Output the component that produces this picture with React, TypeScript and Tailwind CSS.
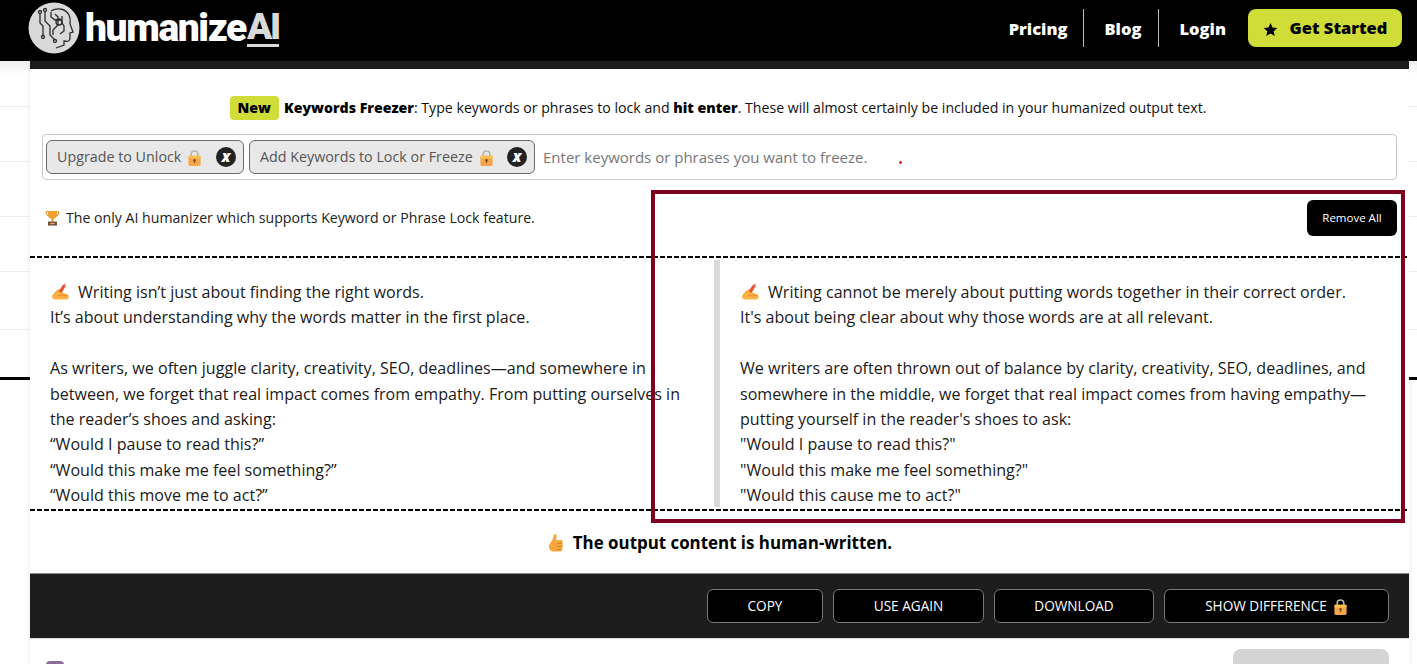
import React from "react";

const sans = "font-['Open_Sans','Noto_Sans',sans-serif]";

const leftLines = [
  "Writing isn’t just about finding the right words.",
  "It’s about understanding why the words matter in the first place.",
  "",
  "As writers, we often juggle clarity, creativity, SEO, deadlines—and somewhere in",
  "between, we forget that real impact comes from empathy. From putting ourselves in",
  "the reader’s shoes and asking:",
  "“Would I pause to read this?”",
  "“Would this make me feel something?”",
  "“Would this move me to act?”",
];

const rightLines = [
  "Writing cannot be merely about putting words together in their correct order.",
  "It's about being clear about why those words are at all relevant.",
  "",
  "We writers are often thrown out of balance by clarity, creativity, SEO, deadlines, and",
  "somewhere in the middle, we forget that real impact comes from having empathy—",
  "putting yourself in the reader's shoes to ask:",
  "\"Would I pause to read this?\"",
  "\"Would this make me feel something?\"",
  "\"Would this cause me to act?\"",
];

function LockIcon({ className }: { className?: string }) {
  return (
    <svg viewBox="0 0 16 18" className={className}>
      <path d="M4.5 8V5.5a3.5 3.5 0 0 1 7 0V8" fill="none" stroke="#b9b4a8" strokeWidth="1.7" />
      <rect x="1.5" y="7" width="13" height="11" rx="1.5" fill="#f5a54a" />
      <rect x="1.5" y="7" width="13" height="3" rx="1.2" fill="#fbc04f" />
      <circle cx="8" cy="12" r="1.3" fill="#7a4a1c" />
      <rect x="7.4" y="12" width="1.2" height="3" fill="#7a4a1c" />
    </svg>
  );
}

function WritingHand({ className }: { className?: string }) {
  return (
    <svg viewBox="0 0 20 18" className={className}>
      <path d="M1 13l5-6 3-1 2 3 7 3c1 1 1 4-1 5H6c-2 0-5 0-5-4z" fill="#fbb144" />
      <path d="M7 13c3-1 7-1 10 0" fill="none" stroke="#e98a2c" strokeWidth="1" />
      <path d="M8 8l5-7 2.5 1.6L11 10z" fill="#e8502f" />
      <path d="M13 1l1-1 2.4 1.6-.9 1z" fill="#f08a7a" />
    </svg>
  );
}

function Trophy({ className }: { className?: string }) {
  return (
    <svg viewBox="0 0 16 18" className={className}>
      <path d="M3 1h10v4c0 3-2 5-5 5S3 8 3 5z" fill="#f0a030" />
      <path d="M3 2H1c0 3 1 4.5 3 5M13 2h2c0 3-1 4.5-3 5" fill="none" stroke="#e09030" strokeWidth="1.2" />
      <rect x="7" y="10" width="2" height="3" fill="#d68a2a" />
      <rect x="3" y="13" width="10" height="4.5" fill="#6d4b3e" />
      <rect x="5.5" y="14.5" width="5" height="1.5" fill="#e6b04c" />
    </svg>
  );
}

function ThumbsUp({ className }: { className?: string }) {
  return (
    <svg viewBox="0 0 16 20" className={className}>
      <path d="M7 1c1.500 0 2 1.500 1.500 3L8 7h5c2 0 2 2.500 1.500 3.500.6 1.500.3 6.500-1.500 8H6c-3 0-5-2-5-5 0-2 1-3.500 2.500-5C5 7 5.500 1 7 1z" fill="#f6a83c" />
      <path d="M9 10.500h5M9 13.500h5M9 16.500h4" stroke="#d9822b" strokeWidth="1" fill="none" />
    </svg>
  );
}

function Logo() {
  return (
    <div className="flex items-center">
      <svg viewBox="0 0 52 52" className="h-[52px] w-[52px]">
        <circle cx="26" cy="26" r="25.5" fill="#d9d9d9" />
        <g fill="none" stroke="#2b2b2b" strokeWidth="1.3">
          <path d="M23 9c7-4 15-2 18 4 2 4 1 7 1 9l3 8-3 1v5c0 3-2 4-6 3v4l-8 3" />
          <path d="M12 12v9l3 3v9M17 9v10l5 5v9l5 5M23 10v5l4 3h6M27 12l3 3v8l-5 5v5M34 14v7l2 3v5l-4 3" />
          <circle cx="12" cy="10" r="1.5" />
          <circle cx="17" cy="8" r="1.5" />
          <circle cx="15" cy="35" r="1.5" />
          <circle cx="27" cy="39" r="1.5" />
          <circle cx="31" cy="20" r="3" />
        </g>
      </svg>
      <span className="ml-[5px] text-[39px] leading-none font-black tracking-[-1.4px] text-white font-['Roboto',sans-serif]">
        humanize
      </span>
      <span className="ml-[1px] border-b-[3px] border-[#d9d9d9] text-[37px] leading-[35px] font-black tracking-[-2px] text-[#d9d9d9] font-['Roboto',sans-serif]">
        AI
      </span>
    </div>
  );
}

function Header() {
  return (
    <header className="flex h-[61px] shrink-0 items-center justify-between bg-black pr-[15px] pb-[5px] pl-[28px]">
      <Logo />
      <nav className="flex items-center text-[16.500px] font-extrabold text-white">
        <span className="mt-[2px]">Pricing</span>
        <span className="ml-[16px] h-[38px] w-px bg-[#bbbbbb]" />
        <span className="mt-[2px] ml-[20px]">Blog</span>
        <span className="ml-[17px] h-[38px] w-px bg-[#bbbbbb]" />
        <span className="mt-[2px] ml-[20px]">Login</span>
        <button className="ml-[22px] flex h-[38px] w-[154px] items-center justify-center gap-[12px] rounded-lg bg-[#d0dc38] pt-[1px] text-[16.500px] font-extrabold text-black">
          <svg viewBox="0 0 24 24" className="mt-[2px] h-[15px] w-[15px]" fill="black">
            <path d="M12 1.500l3.100 7.200 7.800.7-5.900 5.200 1.800 7.700L12 18.200l-6.800 4.100L7 14.600 1.100 9.400l7.800-.7z" />
          </svg>
          Get Started
        </button>
      </nav>
    </header>
  );
}

function Gutter() {
  return (
    <div className="flex shrink-0 flex-col bg-white">
      <div className="h-[46px] border-b border-[#ececec] bg-gradient-to-b from-[#ededed] to-white to-30%" />
      <div className="h-[55px] border-b border-[#ececec]" />
      <div className="h-[55px] border-b border-[#ececec]" />
      <div className="h-[55px] border-b border-[#ececec]" />
      <div className="h-[58px] border-b border-[#ececec]" />
      <div className="h-[50px] border-b-[3px] border-black" />
    </div>
  );
}

function Chip({ label, width }: { label: string; width: string }) {
  return (
    <div className={`flex h-[34px] items-center rounded-md border-[1.5px] border-[#6b6b6b] bg-[#e8e8e8] pr-[7px] pl-[10px] ${width}`}>
      <span className="text-[14.300px] text-[#555555]">{label}</span>
      <LockIcon className="ml-[6px] h-[17px] w-[15px]" />
      <span className="ml-auto flex h-[20px] w-[20px] items-center justify-center rounded-full bg-[#222222] pb-[2px] text-[15px] leading-none font-extrabold text-white italic">
        x
      </span>
    </div>
  );
}

function Dashed() {
  return <div className="h-[2px] shrink-0 bg-[repeating-linear-gradient(90deg,#000_0_5px,transparent_5px_7px)]" />;
}

function TextColumn({ lines, className }: { lines: string[]; className?: string }) {
  return (
    <div className={`whitespace-nowrap text-[16.070px] leading-[25.400px] text-[#1a1a1a] ${className ?? ""}`}>
      {lines.map((line, i) => (
        <div key={i} className="h-[25.400px]">
          {i === 0 && <WritingHand className="mr-[8px] ml-[1px] inline-block h-[18px] w-[19px] align-[-3px]" />}
          {line}
        </div>
      ))}
    </div>
  );
}

function ActionButton({ children, width }: { children: React.ReactNode; width: string }) {
  return (
    <button className={`flex h-[34px] items-center justify-center rounded-md border border-[#777777] bg-black text-[13.600px] text-white ${width}`}>
      {children}
    </button>
  );
}

export default function App() {
  return (
    <div className={`relative flex h-[664px] w-[1417px] flex-col overflow-hidden bg-white ${sans}`}>
      <Header />
      <div className="flex min-h-0 flex-1">
        <div className="w-[30px]">
          <Gutter />
        </div>
        <main className="flex w-[1379px] flex-col bg-white shadow-[0_0_6px_rgba(0,0,0,0.08)]">
          <div className="h-[8px] shrink-0 bg-[#1c1c1c]" />

          {/* Keywords freezer */}
          <div className="mt-[27px] flex h-[24px] items-center justify-center pr-[3px] text-[14.150px] text-[#111111]">
            <span className="mr-[5px] rounded bg-[#d0dc38] px-[8px] py-[1px] font-extrabold text-black">New</span>
            <span className="font-extrabold text-black">Keywords Freezer</span>
            <span>: Type keywords or phrases to lock and&nbsp;</span>
            <span className="font-extrabold text-black">hit enter</span>
            <span>. These will almost certainly be included in your humanized output text.</span>
          </div>

          <div className="mx-[12px] mt-[14px] flex h-[46px] items-center gap-[5px] rounded border border-[#c9c9c9] pl-[3px]">
            <Chip label="Upgrade to Unlock" width="w-[198px]" />
            <Chip label="Add Keywords to Lock or Freeze" width="w-[286px]" />
            <span className="ml-[3px] text-[15px] text-[#777777]">Enter keywords or phrases you want to freeze.</span>
          </div>

          <div className="mt-[19px] flex h-[37px] items-center justify-between pr-[12px] pl-[15px]">
            <div className="flex items-center text-[14.130px] text-[#222222]">
              <Trophy className="mr-[6px] h-[16px] w-[15px]" />
              The only AI humanizer which supports Keyword or Phrase Lock feature.
            </div>
            <button className="h-[36px] w-[90px] rounded-md bg-black text-[11.500px] text-white">Remove All</button>
          </div>

          <div className="mt-[20px]">
            <Dashed />
          </div>

          <div className="flex h-[251px] shrink-0">
            <TextColumn lines={leftLines} className="w-[684px] pt-[22px] pl-[20px]" />
            <div className="mt-[2px] mb-[2px] w-[6px] bg-[#d9d9d9]" />
            <TextColumn lines={rightLines} className="flex-1 pt-[22px] pl-[20px]" />
          </div>

          <Dashed />

          <div className="flex h-[62px] shrink-0 items-center justify-center gap-[8px] pt-[2px] text-[16.900px] font-bold text-black">
            <ThumbsUp className="h-[20px] w-[18px]" />
            The output content is human-written.
          </div>

          <div className="flex h-[65px] shrink-0 items-center justify-end gap-[10px] border-t border-[#888888] bg-[#1c1c1c] pr-[20px]">
            <ActionButton width="w-[116px]">COPY</ActionButton>
            <ActionButton width="w-[151px]">USE AGAIN</ActionButton>
            <ActionButton width="w-[160px]">DOWNLOAD</ActionButton>
            <ActionButton width="w-[225px]">
              SHOW DIFFERENCE
              <LockIcon className="ml-[6px] h-[17px] w-[15px]" />
            </ActionButton>
          </div>

          <div className="relative flex-1 border-t border-[#dddddd]">
            <div className="absolute top-[22px] left-[16px] h-[10px] w-[18px] rounded-t bg-[#8b6c9b]" />
            <div className="absolute top-[10px] right-[20px] h-[20px] w-[156px] rounded-t-lg bg-[#d4d4d4]" />
          </div>
        </main>
        <div className="w-[8px]">
          <Gutter />
        </div>
      </div>

      {/* stray red dot in the input */}
      <div className="absolute top-[161px] left-[899px] h-[3px] w-[3px] rounded-full bg-[#e02020]" />
      {/* highlight rectangle drawn over the page */}
      <div className="absolute top-[190px] left-[651px] h-[333px] w-[754px] border-[4.500px] border-[#80001f]" />
    </div>
  );
}
